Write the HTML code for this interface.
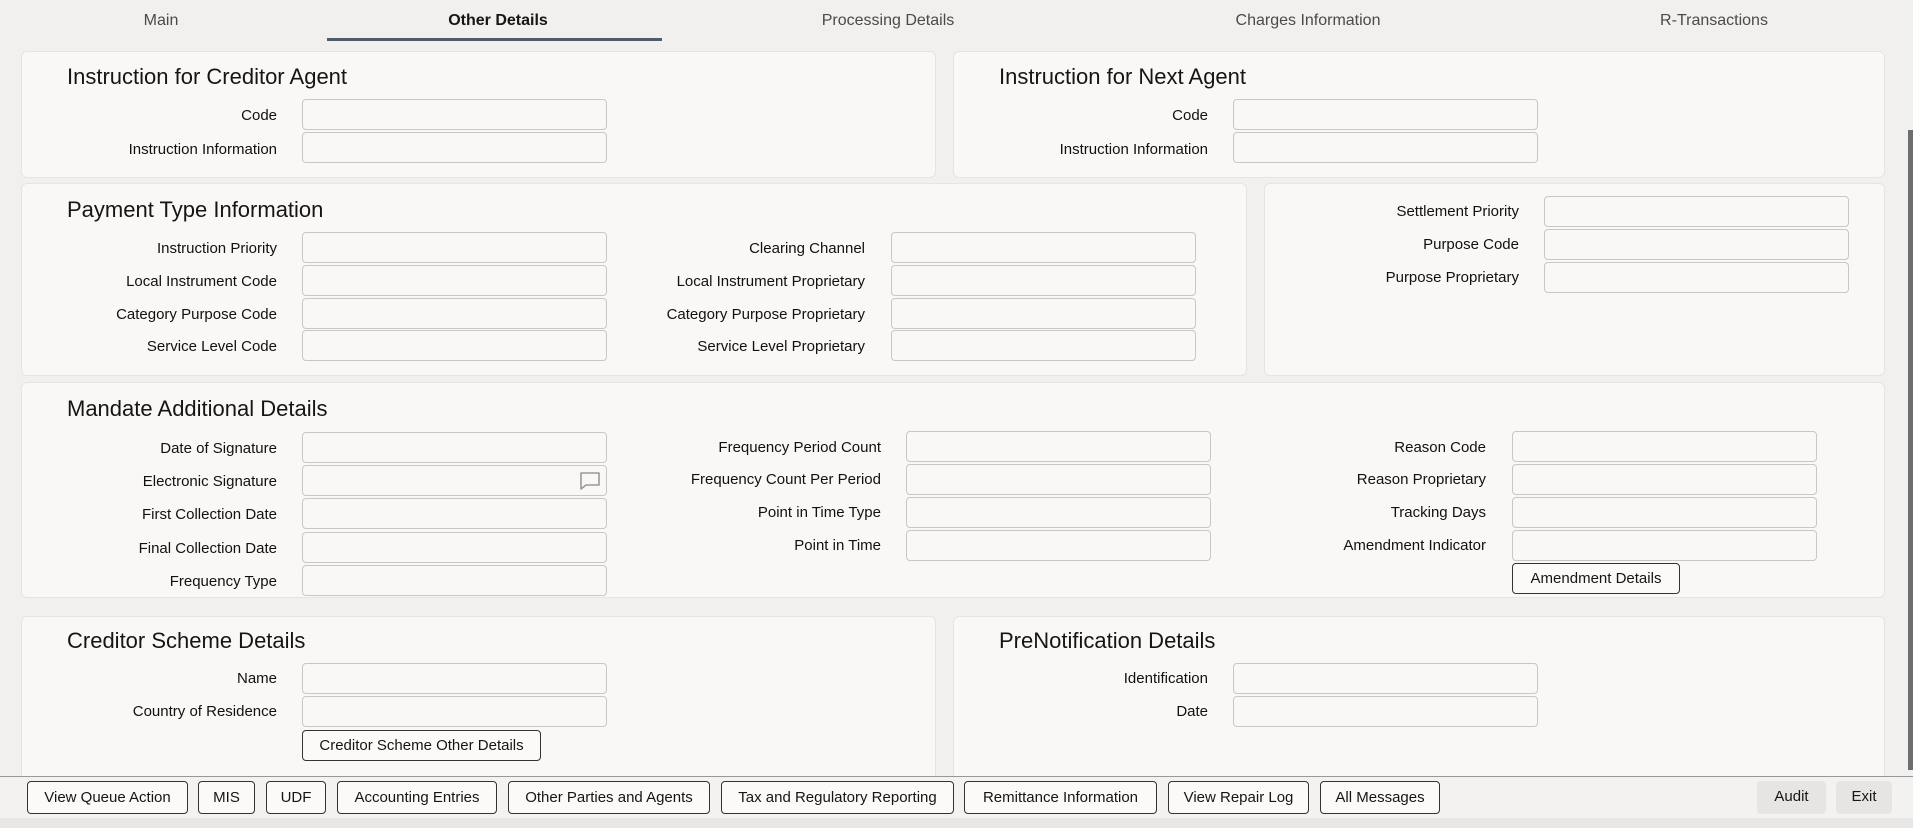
<!DOCTYPE html>
<html><head><meta charset="utf-8"><style>
*{box-sizing:border-box;margin:0;padding:0}
body{width:1913px;height:828px;overflow:hidden;background:#f1f0ee;font-family:"Liberation Sans",sans-serif;color:#161513;position:relative}
.a{position:absolute}
.tab{position:absolute;top:12px;font-size:16px;color:#4a4a4a;transform:translateX(-50%);white-space:nowrap}
.panel{position:absolute;background:#f9f8f7;border:1px solid #e6e4e1;border-radius:6px}
.h{position:absolute;font-size:22px;color:#161513;white-space:nowrap}
.l{position:absolute;font-size:15px;line-height:20px;text-align:right;white-space:nowrap;color:#111}
.i{position:absolute;height:31px;border:1px solid #c9c7c3;border-radius:4px;background:#f9f8f7}
.b{position:absolute;height:33px;border:1px solid #333;border-radius:4px;background:#fbfaf9;font-size:15px;line-height:31px;text-align:center;white-space:nowrap}
</style></head><body>
<div class="tab" style="left:161px">Main</div>
<div class="tab" style="left:498px;color:#161513;font-weight:bold">Other Details</div>
<div class="a" style="left:327px;top:38px;width:335px;height:3px;background:#4f5b73"></div>
<div class="tab" style="left:888px">Processing Details</div>
<div class="tab" style="left:1308px">Charges Information</div>
<div class="tab" style="left:1714px">R-Transactions</div>

<div class="panel" style="left:21px;top:51px;width:915px;height:127px"></div>
<div class="panel" style="left:953px;top:51px;width:932px;height:127px"></div>
<div class="panel" style="left:21px;top:183px;width:1226px;height:193px"></div>
<div class="panel" style="left:1264px;top:183px;width:621px;height:193px"></div>
<div class="panel" style="left:21px;top:382px;width:1864px;height:216px"></div>
<div class="panel" style="left:21px;top:616px;width:915px;height:170px"></div>
<div class="panel" style="left:953px;top:616px;width:932px;height:170px"></div>

<div class="h" style="left:67px;top:64px">Instruction for Creditor Agent</div>
<div class="l" style="right:1636px;top:106px">Code</div><div class="i" style="left:302px;top:99px;width:305px"></div>
<div class="l" style="right:1636px;top:140px">Instruction Information</div><div class="i" style="left:302px;top:132px;width:305px"></div>

<div class="h" style="left:999px;top:64px">Instruction for Next Agent</div>
<div class="l" style="right:705px;top:106px">Code</div><div class="i" style="left:1233px;top:99px;width:305px"></div>
<div class="l" style="right:705px;top:140px">Instruction Information</div><div class="i" style="left:1233px;top:132px;width:305px"></div>

<div class="h" style="left:67px;top:197px">Payment Type Information</div>
<div class="l" style="right:1636px;top:239px">Instruction Priority</div><div class="i" style="left:302px;top:232px;width:305px"></div>
<div class="l" style="right:1636px;top:272px">Local Instrument Code</div><div class="i" style="left:302px;top:265px;width:305px"></div>
<div class="l" style="right:1636px;top:305px">Category Purpose Code</div><div class="i" style="left:302px;top:298px;width:305px"></div>
<div class="l" style="right:1636px;top:337px">Service Level Code</div><div class="i" style="left:302px;top:330px;width:305px"></div>
<div class="l" style="right:1048px;top:239px">Clearing Channel</div><div class="i" style="left:891px;top:232px;width:305px"></div>
<div class="l" style="right:1048px;top:272px">Local Instrument Proprietary</div><div class="i" style="left:891px;top:265px;width:305px"></div>
<div class="l" style="right:1048px;top:305px">Category Purpose Proprietary</div><div class="i" style="left:891px;top:298px;width:305px"></div>
<div class="l" style="right:1048px;top:337px">Service Level Proprietary</div><div class="i" style="left:891px;top:330px;width:305px"></div>
<div class="l" style="right:394px;top:202px">Settlement Priority</div><div class="i" style="left:1544px;top:196px;width:305px"></div>
<div class="l" style="right:394px;top:235px">Purpose Code</div><div class="i" style="left:1544px;top:229px;width:305px"></div>
<div class="l" style="right:394px;top:268px">Purpose Proprietary</div><div class="i" style="left:1544px;top:262px;width:305px"></div>

<div class="h" style="left:67px;top:396px">Mandate Additional Details</div>
<div class="l" style="right:1636px;top:439px">Date of Signature</div><div class="i" style="left:302px;top:432px;width:305px"></div>
<div class="l" style="right:1636px;top:472px">Electronic Signature</div><div class="i" style="left:302px;top:465px;width:305px"></div>
<svg class="a" style="left:579px;top:471px" width="22" height="20" viewBox="0 0 22 20"><path d="M2 2H20V14H7L2 18Z" fill="none" stroke="#999" stroke-width="1.6" stroke-linejoin="round"/></svg>
<div class="l" style="right:1636px;top:505px">First Collection Date</div><div class="i" style="left:302px;top:498px;width:305px"></div>
<div class="l" style="right:1636px;top:539px">Final Collection Date</div><div class="i" style="left:302px;top:532px;width:305px"></div>
<div class="l" style="right:1636px;top:572px">Frequency Type</div><div class="i" style="left:302px;top:565px;width:305px"></div>
<div class="l" style="right:1032px;top:438px">Frequency Period Count</div><div class="i" style="left:906px;top:431px;width:305px"></div>
<div class="l" style="right:1032px;top:470px">Frequency Count Per Period</div><div class="i" style="left:906px;top:464px;width:305px"></div>
<div class="l" style="right:1032px;top:503px">Point in Time Type</div><div class="i" style="left:906px;top:497px;width:305px"></div>
<div class="l" style="right:1032px;top:536px">Point in Time</div><div class="i" style="left:906px;top:530px;width:305px"></div>
<div class="l" style="right:427px;top:438px">Reason Code</div><div class="i" style="left:1512px;top:431px;width:305px"></div>
<div class="l" style="right:427px;top:470px">Reason Proprietary</div><div class="i" style="left:1512px;top:464px;width:305px"></div>
<div class="l" style="right:427px;top:503px">Tracking Days</div><div class="i" style="left:1512px;top:497px;width:305px"></div>
<div class="l" style="right:427px;top:536px">Amendment Indicator</div><div class="i" style="left:1512px;top:530px;width:305px"></div>
<div class="b" style="left:1512px;top:563px;width:168px;height:31px;line-height:29px">Amendment Details</div>

<div class="h" style="left:67px;top:628px">Creditor Scheme Details</div>
<div class="l" style="right:1636px;top:669px">Name</div><div class="i" style="left:302px;top:663px;width:305px"></div>
<div class="l" style="right:1636px;top:702px">Country of Residence</div><div class="i" style="left:302px;top:696px;width:305px"></div>
<div class="b" style="left:302px;top:730px;width:239px;height:31px;line-height:29px">Creditor Scheme Other Details</div>

<div class="h" style="left:999px;top:628px">PreNotification Details</div>
<div class="l" style="right:705px;top:669px">Identification</div><div class="i" style="left:1233px;top:663px;width:305px"></div>
<div class="l" style="right:705px;top:702px">Date</div><div class="i" style="left:1233px;top:696px;width:305px"></div>

<div class="a" style="left:0;top:776px;width:1913px;height:42px;background:#f3f2f0;border-top:1px solid #9a9894"></div>
<div class="a" style="left:0;top:818px;width:1913px;height:10px;background:#e8e7e5"></div>
<div class="b" style="left:27px;top:781px;width:161px">View Queue Action</div>
<div class="b" style="left:198px;top:781px;width:57px">MIS</div>
<div class="b" style="left:266px;top:781px;width:60px">UDF</div>
<div class="b" style="left:337px;top:781px;width:160px">Accounting Entries</div>
<div class="b" style="left:508px;top:781px;width:202px">Other Parties and Agents</div>
<div class="b" style="left:721px;top:781px;width:233px">Tax and Regulatory Reporting</div>
<div class="b" style="left:964px;top:781px;width:193px">Remittance Information</div>
<div class="b" style="left:1168px;top:781px;width:141px">View Repair Log</div>
<div class="b" style="left:1320px;top:781px;width:120px">All Messages</div>
<div class="b" style="left:1757px;top:781px;width:69px;border:none;background:#e6e5e3">Audit</div>
<div class="b" style="left:1836px;top:781px;width:56px;border:none;background:#e6e5e3">Exit</div>

<div class="a" style="left:1908px;top:130px;width:5px;height:640px;background:#6e6e6e"></div>
</body></html>
